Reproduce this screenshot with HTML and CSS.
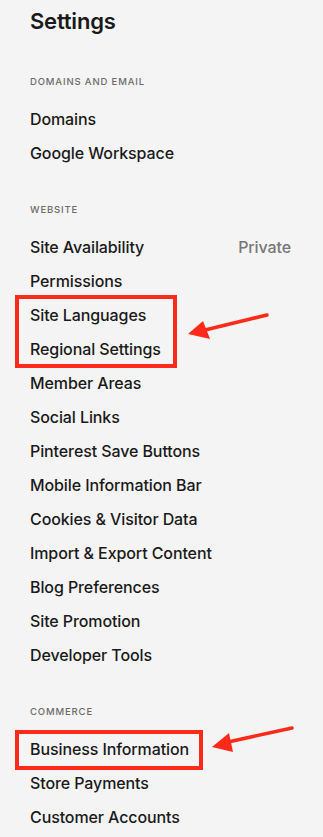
FILE: index.html
```html
<!DOCTYPE html>
<html lang="en">
<head>
<meta charset="utf-8">
<title>Settings</title>
<link rel="stylesheet" href="styles.css">
</head>
<body>
<div class="page">
  <h1 class="title">Settings</h1>

  <section class="group">
    <h2 class="group-label">Domains and Email</h2>
    <ul class="items">
      <li class="item">Domains</li>
      <li class="item">Google Workspace</li>
    </ul>
  </section>

  <section class="group">
    <h2 class="group-label">Website</h2>
    <ul class="items">
      <li class="item"><span>Site Availability</span><span class="item-value">Private</span></li>
      <li class="item">Permissions</li>
      <li class="item">Site Languages</li>
      <li class="item">Regional Settings</li>
      <li class="item">Member Areas</li>
      <li class="item">Social Links</li>
      <li class="item">Pinterest Save Buttons</li>
      <li class="item">Mobile Information Bar</li>
      <li class="item">Cookies &amp; Visitor Data</li>
      <li class="item">Import &amp; Export Content</li>
      <li class="item">Blog Preferences</li>
      <li class="item">Site Promotion</li>
      <li class="item">Developer Tools</li>
    </ul>
  </section>

  <section class="group">
    <h2 class="group-label">Commerce</h2>
    <ul class="items">
      <li class="item">Business Information</li>
      <li class="item">Store Payments</li>
      <li class="item">Customer Accounts</li>
    </ul>
  </section>

  <svg class="annotations" width="323" height="837" viewBox="0 0 323 837" aria-hidden="true">
    <rect x="17" y="297" width="158" height="69" fill="none" stroke="#ff2a1a" stroke-width="4"/>
    <line x1="267" y1="315" x2="205" y2="330" stroke="#ff2a1a" stroke-width="3.5" stroke-linecap="round"/>
    <polygon points="188,334 203,321 210,339" fill="#ff2a1a"/>
    <rect x="17" y="732" width="184" height="36" fill="none" stroke="#ff2a1a" stroke-width="4"/>
    <line x1="292" y1="728" x2="228" y2="742" stroke="#ff2a1a" stroke-width="3.5" stroke-linecap="round"/>
    <polygon points="212,747 229,733 233,752" fill="#ff2a1a"/>
  </svg>
</div>
</body>
</html>
```

FILE: styles.css
```css
html, body {
  margin: 0;
  padding: 0;
  background: #f4f4f4;
}

body {
  font-family: "Inter", "Liberation Sans", sans-serif;
  color: #1a1a1a;
}

.page {
  position: relative;
  width: 323px;
  min-height: 837px;
  box-sizing: border-box;
  padding: 7px 32px 0 30px;
  overflow: hidden;
}

.title {
  margin: 0;
  font-size: 22px;
  line-height: 28px;
  font-weight: 600;
  letter-spacing: -0.2px;
}

.group {
  margin-top: 34px;
}

.group:first-of-type {
  margin-top: 41px;
}

.group-label {
  margin: 0 0 14px;
  font-size: 9.5px;
  line-height: 12px;
  font-weight: 500;
  letter-spacing: 0.09em;
  text-transform: uppercase;
  color: #6b6b6b;
}

.items {
  list-style: none;
  margin: 0;
  padding: 0;
}

.item {
  display: flex;
  justify-content: space-between;
  height: 34px;
  line-height: 34px;
  font-size: 16px;
  font-weight: 500;
  letter-spacing: -0.1px;
}

.item-value {
  color: #777777;
}

.annotations {
  position: absolute;
  top: 0;
  left: 0;
  pointer-events: none;
}
```
